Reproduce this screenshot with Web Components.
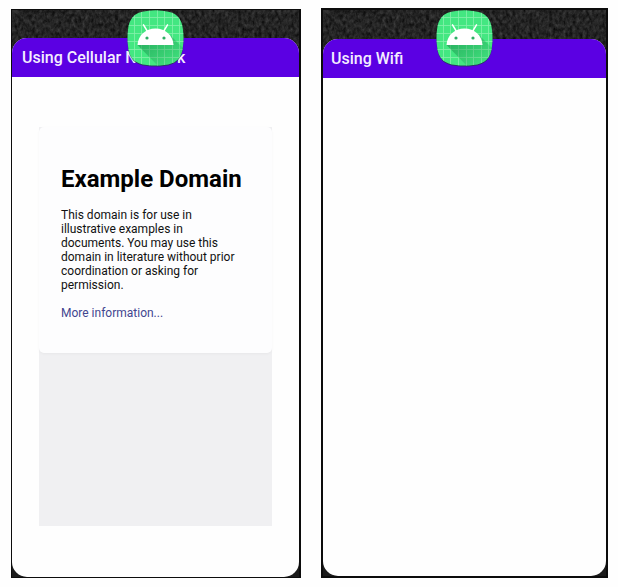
<!DOCTYPE html>
<html lang="en">
<head>
<meta charset="utf-8">
<title>Network comparison</title>
<style>
html, body { height: 100%; }
body { margin: 0; background: #fefefe; font-family: Roboto, "Liberation Sans", sans-serif; }
</style>
</head>
<body>
<phone-pair>
  <phone-screen heading="Using Cellular Network" class="first"><web-page></web-page></phone-screen>
  <phone-screen heading="Using Wifi" class="second"></phone-screen>
</phone-pair>

<template id="pair-t">
<style>
:host { display: grid; grid-template-columns: 290fr 287fr; gap: 20px; box-sizing: border-box; min-height: 100vh; padding: 8px 10px 9px 11px; }
::slotted(.first) { margin-top: 1px; --edge-right: 2px; --edge-left: 1px; --bar-top: 28px; --edge-top: 1px; --edge-bottom: 1px; --bar-pad: 10px; }
::slotted(.second) { --edge-right: 2px; --edge-left: 2px; --bar-top: 29px; --edge-top: 2px; --edge-bottom: 2px; --bar-pad: 8px; }
</style>
<slot></slot>
</template>

<template id="phone-t">
<style>
:host { display: flex; position: relative; box-sizing: border-box; border: 1px solid #0c0c0c; border-width: var(--edge-top) var(--edge-right) var(--edge-bottom) var(--edge-left); background: #1b1b1b; }
.wall { position: absolute; inset: 0; width: 100%; height: 72px; }
section { flex: 1; min-width: 0; position: relative; display: flex; flex-direction: column; margin-top: var(--bar-top); border-radius: 15px; overflow: hidden; background: #fefefe; }
header { box-sizing: border-box; height: 39px; padding: 0 var(--bar-pad); display: flex; align-items: center; background: #5b00e3; color: #f4edff; }
h1 { margin: 0; font-size: 16px; line-height: 20px; font-weight: 500; white-space: nowrap; }
main { flex: 1; display: flex; padding: 50px 27px 51px; }
app-icon { position: absolute; top: 0; left: 50%; transform: translateX(-50%); }
</style>
<svg class="wall" aria-hidden="true"><filter id="g" x="0" y="0" width="100%" height="100%" color-interpolation-filters="sRGB"><feTurbulence type="fractalNoise" baseFrequency="0.3 0.22" numOctaves="3" seed="8"/><feColorMatrix values="0.22 0.14 0 0 -0.04  0.22 0.14 0 0 -0.04  0.22 0.14 0 0 -0.04  0 0 0 0 1"/></filter><rect width="100%" height="100%" filter="url(#g)"/></svg>
<section><header><h1></h1></header><main><slot></slot></main></section>
<app-icon></app-icon>
</template>

<template id="icon-t">
<style>:host { display: block; width: 58px; height: 57px; } svg { display: block; overflow: visible; }</style>
<svg width="57" height="57" viewBox="0 0 57 57" aria-hidden="true">
<defs>
<path id="s" d="M20 1Q28.500 -.5 37 1C50 2 55 9 56 20Q57 28 56 36C55 48 49 54 37 55Q28.500 56 20 55C8 54 2 48 1 36Q0 28 1 20C2 9 7 2 20 1Z"/>
<clipPath id="c"><use href="#s"/></clipPath>
<linearGradient id="sh" x1="0" y1="0" x2="1" y2="1"><stop offset="0" stop-color="#178b49" stop-opacity=".7"/><stop offset=".85" stop-color="#178b49" stop-opacity=".08"/></linearGradient>
</defs>
<use href="#s" fill="#164e30" opacity=".7" transform="translate(0 1)"/>
<g clip-path="url(#c)">
<rect width="57" height="57" fill="#43e781"/>
<path d="M7.500 0V57M14.500 0V57M22.500 0V57M30.500 0V57M37.500 0V57M45.500 0V57M52.500 0V57M0 7.500H57M0 15.500H57M0 23.500H57M0 31.500H57M0 39.500H57M0 47.500H57" stroke="#9cf5bb" stroke-width=".8" opacity=".75"/>
<path d="M10.500 35L32 57H57V39L42 24L46.500 35Z" fill="url(#sh)"/>
</g>
<path d="M10.500 35C11 25.500 18.500 18.500 28.500 18.500S46 25.500 46.500 35Z" fill="#fff"/>
<path d="M20.500 21.500L16.500 14.800M36.500 21.500L40.500 14.800" stroke="#fff" stroke-width="1.500" stroke-linecap="round"/>
<circle cx="20" cy="28" r="1.600" fill="#2fae65"/><circle cx="37" cy="28" r="1.600" fill="#2fae65"/>
</svg>
</template>

<template id="web-t">
<style>
:host { display: block; flex: 1; min-width: 0; background: #f0f0f2; }
article { padding: 38px 28px 33px 22px; background: #fdfdfe; border-radius: 5px; box-shadow: 0 1px 3px rgba(0,0,0,.04); }
h2 { margin: 0 0 15px; font-size: 24px; line-height: 28px; font-weight: 700; color: #000; }
p { margin: 0 0 14px; font-size: 12px; line-height: 14px; color: #111; }
p:last-child { margin: 0; }
a { color: #42468f; text-decoration: none; }
</style>
<article>
<h2>Example Domain</h2>
<p>This domain is for use in illustrative examples in documents. You may use this domain in literature without prior coordination or asking for permission.</p>
<p><a href="#">More information...</a></p>
</article>
</template>

<script>
function define(name, id, setup) {
  customElements.define(name, class extends HTMLElement {
    constructor() {
      super();
      this.attachShadow({ mode: "open" }).append(document.getElementById(id).content.cloneNode(true));
    }
    connectedCallback() { if (setup) setup(this); }
  });
}
define("app-icon", "icon-t");
define("web-page", "web-t");
define("phone-screen", "phone-t", el => { el.shadowRoot.querySelector("h1").textContent = el.getAttribute("heading"); });
define("phone-pair", "pair-t");
</script>
</body>
</html>
